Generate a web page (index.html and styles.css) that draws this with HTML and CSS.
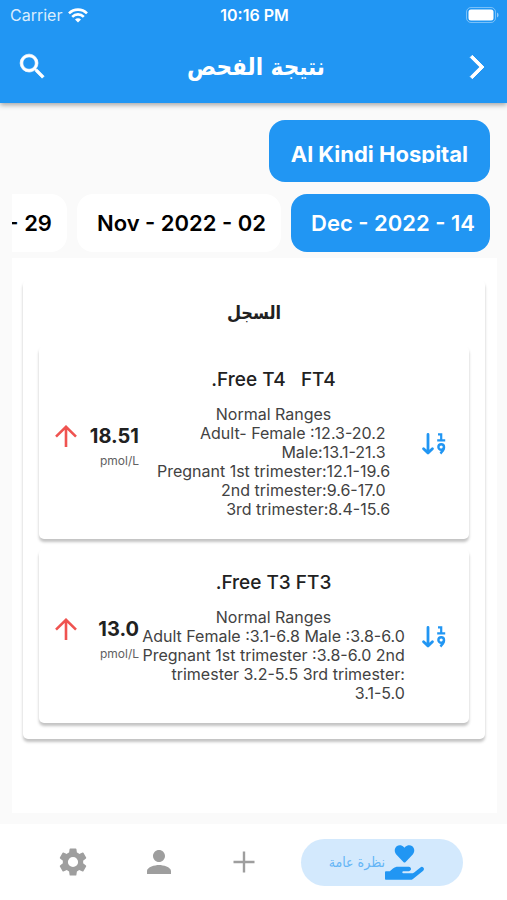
FILE: index.html
```html
<!DOCTYPE html>
<html lang="ar" dir="rtl">
<head>
    <meta charset="UTF-8">
    <meta name="viewport" content="width=device-width, initial-scale=1.0">
    <title>نتيجة الفحص</title>
    <link rel="stylesheet" href="styles.css">
</head>
<body>
    <header class="header">
        <div class="status-bar" dir="ltr">
            <div class="carrier">
                <span>Carrier</span>
                <svg width="20" height="15" viewBox="0 0 20 15" fill="none" stroke="#fff" stroke-width="2.6">
                    <path d="M1 5.4a12.7 12.7 0 0 1 18 0"/>
                    <path d="M4.2 8.8a8.2 8.2 0 0 1 11.6 0"/>
                    <path d="M10 14.6l-3-3.1a4.2 4.2 0 0 1 6 0z" fill="#fff" stroke="none"/>
                </svg>
            </div>
            <span class="time">10:16 PM</span>
            <svg class="battery" width="33" height="16" viewBox="0 0 33 16">
                <rect x="0.5" y="0.5" width="29" height="15" rx="4.5" fill="none" stroke="#fff" stroke-opacity="0.4"/>
                <rect x="2.5" y="2.5" width="25" height="11" rx="2.5" fill="#fff"/>
                <path d="M31 5.5v5q1.6-.8 1.6-2.5T31 5.5z" fill="#fff" fill-opacity="0.5"/>
            </svg>
        </div>
        <div class="app-bar">
            <button class="icon-btn" aria-label="رجوع">
                <svg width="28" height="28" viewBox="0 0 24 24" fill="#fff" stroke="#fff" stroke-width="0.8"><path d="M6.23 20.23L8 22l10-10L8 2 6.23 3.77 14.46 12z"/></svg>
            </button>
            <h1>نتيجة الفحص</h1>
            <button class="icon-btn" aria-label="بحث">
                <svg width="33" height="33" viewBox="0 0 24 24" fill="#fff" stroke="#fff" stroke-width="0.5"><path d="M15.5 14h-.79l-.28-.27A6.47 6.47 0 0 0 16 9.5 6.5 6.5 0 1 0 9.5 16c1.61 0 3.09-.59 4.23-1.57l.27.28v.79l5 4.99L20.49 19l-4.99-5zm-6 0C7.01 14 5 11.99 5 9.5S7.01 5 9.5 5 14 7.01 14 9.5 11.99 14 9.5 14z"/></svg>
            </button>
        </div>
    </header>

    <main class="content">
        <button class="hospital"><span dir="ltr">Al Kindi Hospital</span></button>

        <div class="dates">
            <button class="date active" dir="ltr">Dec - 2022 - 14</button>
            <button class="date" dir="ltr">Nov - 2022 - 02</button>
            <button class="date" dir="ltr">Nov - 2022 - 29</button>
        </div>

        <section class="panel">
            <div class="record">
                <h2>السجل</h2>

                <article class="result">
                    <svg class="sort" width="24" height="24" viewBox="0 0 24 24" fill="none" stroke="#2196f3" stroke-width="2.8">
                        <path d="M6 2.4v18M1.6 16.8L6 21l4.4-4.2" stroke-linejoin="round" stroke-linecap="round"/>
                        <path d="M16 2.4h3.2v5.4M15.2 8.4h8" stroke-width="2.2"/>
                        <circle cx="19.2" cy="15" r="2.8" stroke-width="2.4"/>
                        <path d="M22 15.6q-.6 3.6-3.6 6" stroke-width="2.6"/>
                    </svg>
                    <div class="test">
                        <h3>Free T4 &nbsp; FT4.</h3>
                        <p>Normal Ranges</p>
                        <p class="ranges" dir="ltr">Adult- Female :12.3-20.2&nbsp;<br>Male:13.1-21.3&nbsp;<br>Pregnant 1st trimester:12.1-19.6<br>2nd trimester:9.6-17.0&nbsp;<br>3rd trimester:8.4-15.6</p>
                    </div>
                    <div class="value">
                        <strong>18.51</strong>
                        <svg width="22" height="22" viewBox="0 0 22 22" fill="none" stroke="#ef5350" stroke-width="2.6"><path d="M11 22V2M1 11.6L11 1.8l10 9.8"/></svg>
                        <small dir="ltr">pmol/L</small>
                    </div>
                </article>

                <article class="result">
                    <svg class="sort" width="24" height="24" viewBox="0 0 24 24" fill="none" stroke="#2196f3" stroke-width="2.8">
                        <path d="M6 2.4v18M1.6 16.8L6 21l4.4-4.2" stroke-linejoin="round" stroke-linecap="round"/>
                        <path d="M16 2.4h3.2v5.4M15.2 8.4h8" stroke-width="2.2"/>
                        <circle cx="19.2" cy="15" r="2.8" stroke-width="2.4"/>
                        <path d="M22 15.6q-.6 3.6-3.6 6" stroke-width="2.6"/>
                    </svg>
                    <div class="test">
                        <h3>Free T3 FT3.</h3>
                        <p>Normal Ranges</p>
                        <p class="ranges" dir="ltr">Adult Female :3.1-6.8 Male :3.8-6.0<br>Pregnant 1st trimester :3.8-6.0 2nd<br>trimester 3.2-5.5 3rd trimester:<br>3.1-5.0</p>
                    </div>
                    <div class="value">
                        <strong>13.0</strong>
                        <svg width="22" height="22" viewBox="0 0 22 22" fill="none" stroke="#ef5350" stroke-width="2.6"><path d="M11 22V2M1 11.6L11 1.8l10 9.8"/></svg>
                        <small dir="ltr">pmol/L</small>
                    </div>
                </article>
            </div>
        </section>
    </main>

    <nav class="bottom-nav">
        <a class="nav-item active" href="#overview">
            <svg width="39" height="35" viewBox="0 0 576 512" fill="#2196f3"><path d="M275.3 250.5c7 7.4 18.4 7.4 25.5 0l108.9-114.2c31.6-33.2 29.8-88.2-5.6-118.8-30.8-26.7-76.7-21.9-104.9 7.7L288 36.9l-11.1-11.6C248.7-4.4 202.8-9.2 172 17.5c-35.3 30.6-37.2 85.6-5.6 118.8l108.9 114.2zm290 77.6c-11.8-10.7-30.2-10-42.6 0L430.3 402c-11.3 9.1-25.4 14-40 14H272c-8.8 0-16-7.2-16-16s7.2-16 16-16h78.3c15.9 0 30.7-10.9 33.3-26.6 3.3-20-12.1-37.4-31.6-37.4H192c-27 0-53.1 9.3-74.1 26.3L71.4 384H16c-8.8 0-16 7.2-16 16v96c0 8.8 7.2 16 16 16h356.8c14.5 0 28.6-4.9 40-14L564 377c15.2-12.1 16.4-35.3 1.3-48.9z"/></svg>
            <span>نظرة عامة</span>
        </a>
        <a class="nav-item" href="#add" aria-label="إضافة">
            <svg width="36" height="36" viewBox="0 0 24 24" fill="#9e9e9e"><path d="M19 12.8h-6.2V19h-1.6v-6.2H5v-1.6h6.2V5h1.6v6.2H19z"/></svg>
        </a>
        <a class="nav-item" href="#profile" aria-label="الملف الشخصي">
            <svg width="36" height="36" viewBox="0 0 24 24" fill="#9e9e9e"><path d="M12 12c2.21 0 4-1.79 4-4s-1.79-4-4-4-4 1.79-4 4 1.79 4 4 4zm0 2c-2.67 0-8 1.34-8 4v2h16v-2c0-2.66-5.33-4-8-4z"/></svg>
        </a>
        <a class="nav-item" href="#settings" aria-label="الإعدادات">
            <svg width="34" height="34" viewBox="0 0 24 24" fill="#9e9e9e"><path d="M19.14 12.94c.04-.3.06-.61.06-.94 0-.32-.02-.64-.07-.94l2.03-1.58a.49.49 0 0 0 .12-.61l-1.92-3.32a.49.49 0 0 0-.59-.22l-2.39.96c-.5-.38-1.03-.7-1.62-.94l-.36-2.54a.48.48 0 0 0-.48-.41h-3.84c-.24 0-.43.17-.47.41l-.36 2.54c-.59.24-1.13.57-1.62.94l-2.39-.96a.48.48 0 0 0-.59.22L2.74 8.87a.47.47 0 0 0 .12.61l2.03 1.58c-.05.3-.09.63-.09.94s.02.64.07.94l-2.03 1.58a.49.49 0 0 0-.12.61l1.92 3.32c.12.22.37.29.59.22l2.39-.96c.5.38 1.03.7 1.62.94l.36 2.54c.05.24.24.41.48.41h3.84c.24 0 .44-.17.47-.41l.36-2.54c.59-.24 1.13-.56 1.62-.94l2.39.96c.22.08.47 0 .59-.22l1.92-3.32a.47.47 0 0 0-.12-.61l-2.01-1.58zM12 15.6a3.6 3.6 0 1 1 0-7.2 3.6 3.6 0 0 1 0 7.2z"/></svg>
        </a>
    </nav>
</body>
</html>
```
FILE: styles.css
```css
* {
    margin: 0;
    padding: 0;
    box-sizing: border-box;
}

body {
    display: flex;
    flex-direction: column;
    min-height: 100vh;
    background-color: #fafafa;
    font-family: Inter, "DejaVu Sans", sans-serif;
    color: #212121;
}

button {
    border: none;
    background: none;
    font: inherit;
    cursor: pointer;
}

svg {
    display: block;
    flex-shrink: 0;
}

/* Blue header: status bar and title */
.header {
    background-color: #2196f3;
    color: #fff;
    box-shadow: 0 2px 5px rgba(0, 0, 0, 0.35);
}

.status-bar {
    display: grid;
    grid-template-columns: 1fr auto 1fr;
    align-items: center;
    height: 30px;
    padding: 0 8px 0 10px;
    font-size: 16px;
}

.carrier {
    display: flex;
    align-items: center;
    gap: 6px;
    color: #d9edfd;
}

.time {
    font-weight: 600;
}

.battery {
    justify-self: end;
}

.app-bar {
    display: flex;
    align-items: center;
    justify-content: space-between;
    height: 73px;
    padding: 0 16px;
}

.app-bar h1 {
    font-family: "DejaVu Sans Condensed", "DejaVu Sans", sans-serif;
    font-size: 24px;
    line-height: 32px;
}

.icon-btn {
    display: flex;
}

/* Main area */
.content {
    flex: 1;
    display: flex;
    flex-direction: column;
    align-items: stretch;
    padding: 17px 10px 11px 12px;
}

.hospital {
    align-self: flex-start;
    height: 62px;
    margin: 0 7px 12px;
    padding: 0 22px;
    border-radius: 16px;
    background-color: #2196f3;
    color: #fff;
    font-size: 22px;
    font-weight: 700;
}

/* the label box is shorter than its line, so descenders are cut */
.hospital span {
    display: block;
    height: 22px;
    margin-top: 2px;
    line-height: 26px;
    overflow: hidden;
}

.dates {
    display: flex;
    gap: 10px;
    padding-right: 7px;
    margin-bottom: 6px;
    overflow: hidden;
}

.date {
    flex-shrink: 0;
    height: 58px;
    padding: 0 15px 0 20px;
    border-radius: 16px;
    background-color: #fff;
    color: #000;
    font-size: 22px;
    font-weight: 600;
}

.date.active {
    background-color: #2196f3;
    color: #fff;
}

.panel {
    flex: 1;
    padding: 22px 12px 22px 11px;
    background-color: #fff;
}

.record {
    padding: 16px;
    border-radius: 5px;
    box-shadow: 0 3px 3px rgba(0, 0, 0, 0.24);
}

.record h2 {
    margin-bottom: 16px;
    font-family: "DejaVu Sans Condensed", "DejaVu Sans", sans-serif;
    font-size: 18px;
    line-height: 34px;
    text-align: center;
}

/* One lab result */
.result {
    display: grid;
    grid-template-columns: 61fr 269fr 100fr;
    align-items: center;
    padding: 22px 0 20px;
    border-radius: 5px;
    box-shadow: 0 3px 3px rgba(0, 0, 0, 0.24);
}

.result + .result {
    margin-top: 10px;
}

.sort {
    justify-self: end;
    margin-left: 14px;
}

.test {
    display: flex;
    flex-direction: column;
    align-items: center;
    font-size: 16px;
    line-height: 19px;
    color: #424242;
    white-space: nowrap;
}

.test h3 {
    margin-bottom: 13px;
    font-size: 19px;
    font-weight: 500;
    line-height: 24px;
    color: #212121;
}

.ranges {
    text-align: right;
}

.value {
    display: grid;
    grid-template-columns: 1fr auto;
    column-gap: 12px;
    align-items: center;
    padding-left: 16px;
}

.value strong {
    font-size: 20px;
    font-weight: 700;
    line-height: 34px;
}

.value small {
    grid-column: 1 / -1;
    font-size: 12px;
    line-height: 16px;
    text-align: right;
    color: #616161;
}

/* Bottom navigation */
.bottom-nav {
    display: flex;
    align-items: center;
    justify-content: space-between;
    height: 76px;
    padding: 0 44px;
    background-color: #fff;
}

.nav-item {
    display: flex;
    align-items: center;
    justify-content: center;
    width: 58px;
    height: 47px;
    border-radius: 24px;
    text-decoration: none;
}

.nav-item.active {
    justify-content: flex-start;
    width: 162px;
    padding-right: 39px;
    background-color: #d3e9fd;
    color: #64b5f6;
    font-family: "DejaVu Sans Condensed", "DejaVu Sans", sans-serif;
    font-size: 14px;
    white-space: nowrap;
}
```
